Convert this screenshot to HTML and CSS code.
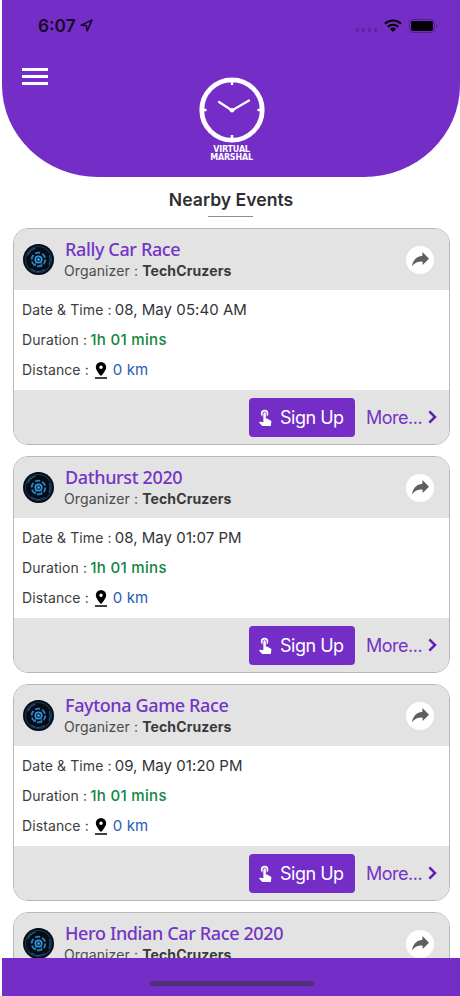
FILE: index.html
```
<!DOCTYPE html>
<html lang="en">
<head>
<meta charset="utf-8">
<title>Nearby Events</title>
<link rel="stylesheet" href="styles.css">
</head>
<body>
<svg class="defs" aria-hidden="true">
  <symbol id="wheel" viewBox="0 0 30 30">
    <circle cx="15" cy="15" r="15" fill="#080b16"/>
    <circle cx="15" cy="15" r="12.600" fill="none" stroke="#123a57" stroke-width="1"/>
    <path d="M4.500 11A11.300 11.300 0 0 1 12 4M8 24a11.300 11.300 0 0 0 13 .6M25.500 11A11.300 11.300 0 0 1 25 20" fill="none" stroke="#1d628c" stroke-width="1"/>
    <circle cx="15" cy="15" r="6.600" fill="none" stroke="#2583bd" stroke-width="1.800" stroke-dasharray="4.900 2"/>
    <circle cx="15" cy="15" r="3.200" fill="#0d3453" stroke="#3598d6" stroke-width="1.500"/>
    <circle cx="15" cy="15" r="1.200" fill="#49a9e2"/>
    <path d="M12.500 18.500l-1 3M17.500 18.500l1 3" stroke="#2583bd" stroke-width="1"/>
  </symbol>
  <symbol id="share" viewBox="0 0 17 15">
    <path d="M10.400 0L17 6.700l-6.400 6.200V9.600C6 9.400 3 10.700 0 14.200 1 8.200 4.400 4.300 10.400 3.700z" fill="#5e5e5e"/>
  </symbol>
  <symbol id="pin" viewBox="0 0 12 17">
    <path fill-rule="evenodd" d="M6 0a5.200 5.200 0 0 0-5.200 5.200C.8 8.700 6 14 6 14s5.200-5.300 5.200-8.800A5.200 5.200 0 0 0 6 0zm0 3.600a1.700 1.700 0 1 1 0 3.400 1.700 1.700 0 0 1 0-3.400z"/>
    <path d="M0 15.200h12v1.600H0z"/>
  </symbol>
  <symbol id="tap" viewBox="3.500 1 17 21.500">
    <path fill="#fff" d="M9 11.240V7.500a2.500 2.500 0 0 1 5 0v3.740c1.210-.81 2-2.180 2-3.740a4.500 4.500 0 0 0-9 0c0 1.560.79 2.930 2 3.740zm9.840 4.630l-4.540-2.260c-.17-.07-.35-.11-.54-.11H13v-6a1.500 1.500 0 0 0-3 0v10.740l-3.430-.72c-.08-.01-.15-.03-.24-.03-.31 0-.59.13-.79.330l-.79.800 4.940 4.940c.27.270.65.440 1.060.440h6.790c.75 0 1.330-.55 1.440-1.280l.75-5.270c.01-.07.020-.14.020-.2 0-.62-.38-1.160-.91-1.380z"/>
  </symbol>
</svg>
<div class="app">
  <header class="top">
    <div class="status">
      <span class="time">6:07</span>
      <svg class="loc" viewBox="0 0 12 12"><path d="M1 5.600L11 1 6.600 11 5.900 6.200z" fill="none" stroke="#150927" stroke-width="1.400" stroke-linejoin="round"/></svg>
      <span class="dots"><i></i><i></i><i></i><i></i></span>
      <svg class="wifi" viewBox="0 0 18 13"><g fill="none" stroke="#09040f" stroke-width="2.200"><path d="M.9 4.800a11.600 11.600 0 0 1 16.200 0"/><path d="M3.800 7.900a7.400 7.400 0 0 1 10.400 0"/></g><path d="M9 13L5.900 9.900a4.400 4.400 0 0 1 6.200 0z" fill="#09040f"/></svg>
      <svg class="battery" viewBox="0 0 29 14"><rect x=".5" y=".5" width="25" height="13" rx="3.500" fill="none" stroke="#4e2090"/><rect x="2" y="2" width="22" height="10" rx="2" fill="#030105"/><path d="M27.300 4.800c1.600.7 1.600 3.700 0 4.400z" fill="#4e2090"/></svg>
    </div>
    <div class="menu"><i></i><i></i><i></i></div>
    <div class="brand">
      <svg class="clock" viewBox="0 0 66 66"><circle cx="33" cy="33" r="30.200" fill="none" stroke="#fff" stroke-width="4.800"/><path d="M33 3v5M33 58v5M3 33h4.500M58.500 33H63" stroke="#fff" stroke-width="2.400"/><path d="M20 25l13 8.500L50 23.500" fill="none" stroke="#fff" stroke-width="2.300" stroke-linecap="round"/><circle cx="33" cy="33.300" r="2.300" fill="#fff"/></svg>
      <div class="brand-name">VIRTUAL<br>MARSHAL</div>
    </div>
  </header>
  <h1 class="heading">Nearby Events</h1>
  <main class="list">
    <article class="card">
      <div class="head"><svg class="wheel"><use href="#wheel"/></svg><div class="names"><h2>Rally Car Race</h2><p>Organizer : <b>TechCruzers</b></p></div><span class="share"><svg><use href="#share"/></svg></span></div>
      <div class="info"><p>Date &amp; Time : <span class="date">08, May 05:40 AM</span></p><p>Duration : <span class="dur">1h 01 mins</span></p><p class="distance">Distance : <svg class="pin"><use href="#pin"/></svg><span class="km">0 km</span></p></div>
      <div class="foot"><span class="signup"><svg><use href="#tap"/></svg>Sign Up</span><span class="more">More...</span><svg class="chev" viewBox="0 0 9 14"><path d="M1.300 1.300L7 7l-5.700 5.700"/></svg></div>
    </article>
    <article class="card">
      <div class="head"><svg class="wheel"><use href="#wheel"/></svg><div class="names"><h2>Dathurst 2020</h2><p>Organizer : <b>TechCruzers</b></p></div><span class="share"><svg><use href="#share"/></svg></span></div>
      <div class="info"><p>Date &amp; Time : <span class="date">08, May 01:07 PM</span></p><p>Duration : <span class="dur">1h 01 mins</span></p><p class="distance">Distance : <svg class="pin"><use href="#pin"/></svg><span class="km">0 km</span></p></div>
      <div class="foot"><span class="signup"><svg><use href="#tap"/></svg>Sign Up</span><span class="more">More...</span><svg class="chev" viewBox="0 0 9 14"><path d="M1.300 1.300L7 7l-5.700 5.700"/></svg></div>
    </article>
    <article class="card">
      <div class="head"><svg class="wheel"><use href="#wheel"/></svg><div class="names"><h2>Faytona Game Race</h2><p>Organizer : <b>TechCruzers</b></p></div><span class="share"><svg><use href="#share"/></svg></span></div>
      <div class="info"><p>Date &amp; Time : <span class="date">09, May 01:20 PM</span></p><p>Duration : <span class="dur">1h 01 mins</span></p><p class="distance">Distance : <svg class="pin"><use href="#pin"/></svg><span class="km">0 km</span></p></div>
      <div class="foot"><span class="signup"><svg><use href="#tap"/></svg>Sign Up</span><span class="more">More...</span><svg class="chev" viewBox="0 0 9 14"><path d="M1.300 1.300L7 7l-5.700 5.700"/></svg></div>
    </article>
    <article class="card">
      <div class="head"><svg class="wheel"><use href="#wheel"/></svg><div class="names"><h2>Hero Indian Car Race 2020</h2><p>Organizer : <b>TechCruzers</b></p></div><span class="share"><svg><use href="#share"/></svg></span></div>
    </article>
  </main>
  <footer class="bottom"><i></i></footer>
</div>
</body>
</html>
```

FILE: styles.css
```
* { box-sizing: border-box; }
body, h1, h2, p { margin: 0; }
body { background: #fff; font-family: Inter, sans-serif; color: #3c3c3e; }
.defs { display: none; }
svg { display: block; flex: none; }
.app { width: 460px; height: 996px; overflow: hidden; display: flex; flex-direction: column; }

.top { flex: none; height: 177px; margin-left: 2px; background: #752dc8; border-radius: 0 0 96px 96px / 0 0 92px 92px; }
.status { height: 51px; display: flex; align-items: center; padding: 0 22px 0 36px; }
.time { width: 38px; font-size: 17.300px; font-weight: 600; line-height: 20px; color: #150927; white-space: nowrap; }
.loc { width: 13px; height: 13px; margin-left: 4px; }
.dots { display: flex; gap: 2.500px; margin: 9px 7px 0 auto; }
.dots i { width: 3.500px; height: 3.500px; border-radius: 50%; background: #5b26a0; }
.wifi { width: 18px; height: 13px; margin-right: 7px; }
.battery { width: 29px; height: 14px; }
.menu { height: 26px; padding: 17px 0 0 20px; display: flex; flex-direction: column; gap: 4px; }
.menu i { flex: none; width: 26px; height: 3px; background: #fff; }
.brand { display: flex; flex-direction: column; align-items: center; margin-right: -1px; }
.clock { width: 66px; height: 66px; }
.brand-name { margin-top: 3px; font: bold 8px/8px "DejaVu Sans", sans-serif; letter-spacing: -.2px; color: #fff; text-align: center; }

.heading { flex: none; align-self: center; height: 40px; margin: 0 0 11px 2px; padding-top: 11px; font-size: 17.600px; line-height: 24px; font-weight: 600; color: #2f2f31; display: flex; flex-direction: column; align-items: center; gap: 4px; }
.heading::after { content: ""; width: 45px; height: 1px; background: #8e8e90; }

.list { flex: 1; min-height: 0; overflow: hidden; padding: 0 10px 0 13px; display: flex; flex-direction: column; gap: 11px; }
.card { flex: none; height: 217px; border: 1px solid #b7b7b7; border-radius: 15px; overflow: hidden; background: #fff; }
.head { height: 61px; background: #e3e3e3; display: flex; align-items: center; padding: 0 15px 0 9px; }
.wheel { width: 31px; height: 31px; }
.names { flex: 1; padding-left: 10px; white-space: nowrap; }
.names h2 { font: 500 18px/22px "Noto Sans", sans-serif; letter-spacing: -.37px; color: #7434c6; padding-left: 1px; margin: -1px 0 1px; }
.names p { font-size: 14px; line-height: 20px; letter-spacing: .12px; color: #4b4b4d; }
.names b { font-weight: 700; color: #3a3a3c; }
.share { width: 28px; height: 28px; border-radius: 50%; background: #fff; display: flex; align-items: center; justify-content: center; }
.share svg { width: 17px; height: 15px; }
.info { height: 100px; padding: 5px 0 0 8px; }
.info p { height: 30px; line-height: 30px; font-size: 14px; letter-spacing: .1px; display: flex; align-items: center; white-space: pre; }
.date, .dur, .km { font-size: 15px; }
.info .date { margin-left: -1px; letter-spacing: .05px; }
.date { color: #333335; }
.dur { color: #108540; font-weight: 500; letter-spacing: .33px; margin-left: -1px; }
.km { color: #1e5cb9; }
.pin { width: 12px; height: 17px; margin: 0 6px 0 2px; }
.foot { height: 54px; background: #e3e3e3; display: flex; align-items: center; justify-content: flex-end; padding-right: 12px; font-size: 18px; letter-spacing: -.5px; }
.signup { width: 106px; height: 39px; border-radius: 4px; background: #752dc8; color: #fff; display: flex; align-items: center; padding-left: 9px; gap: 8px; white-space: nowrap; }
.signup svg { width: 14px; height: 18px; }
.more { margin-left: 11px; width: 62px; color: #7434c6; white-space: nowrap; }
.chev { width: 9px; height: 14px; fill: none; stroke: #6120b0; stroke-width: 2.500; }
.bottom { flex: none; height: 38px; margin-left: 2px; background: #752dc8; display: flex; justify-content: center; padding: 23px 0 0 1px; }
.bottom i { width: 164px; height: 5px; border-radius: 3px; background: #4f2f78; }
```
